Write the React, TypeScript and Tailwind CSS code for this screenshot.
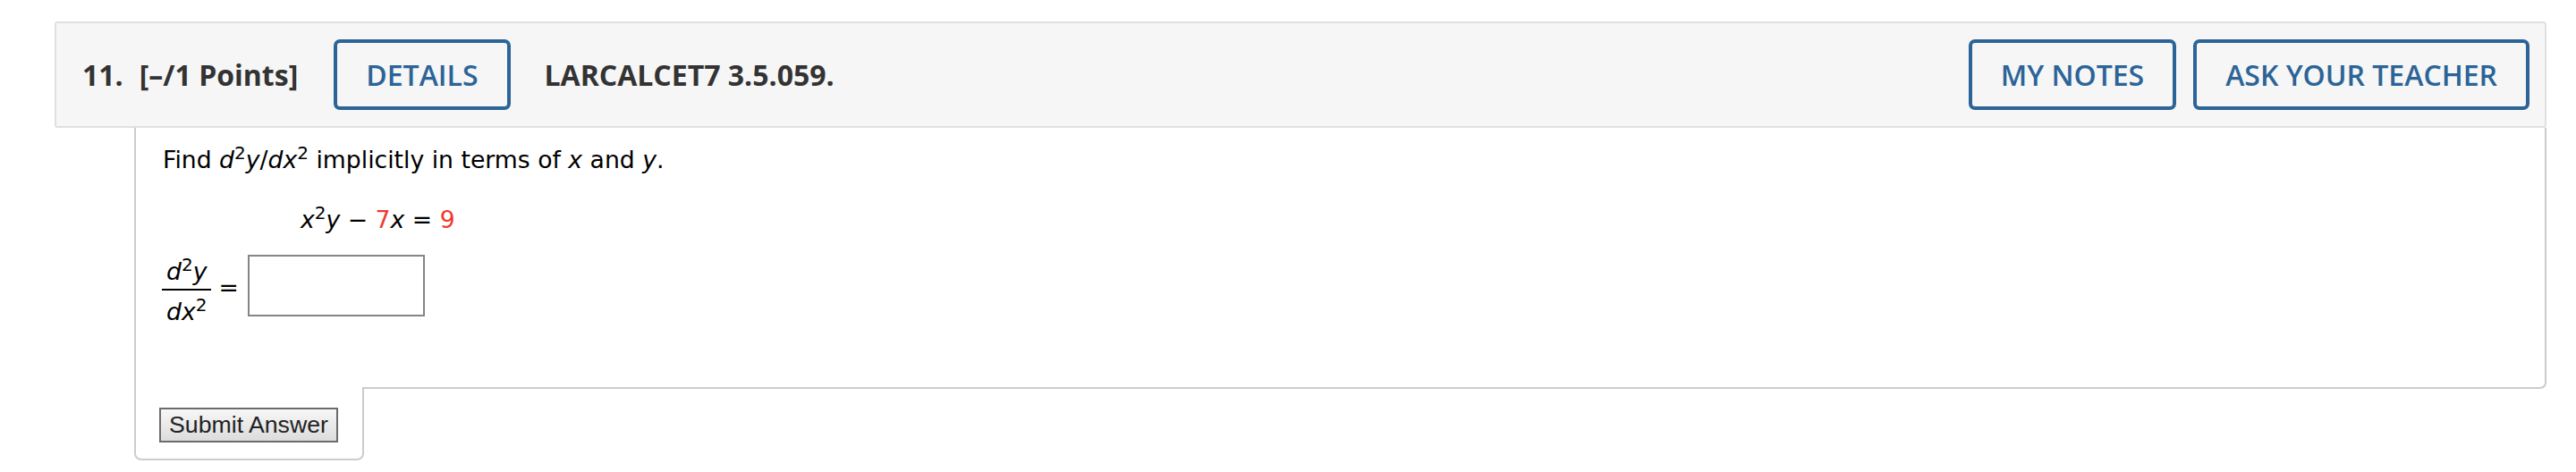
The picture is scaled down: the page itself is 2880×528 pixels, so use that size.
export default function App() {
  const btn =
    "h-[79px] px-[32px] border-[4px] border-[#2c6497] rounded-[7px] text-[#2c6497] text-[32px] font-semibold leading-none flex items-center";

  return (
    <div className="w-[2880px] h-[528px] bg-white pt-[24px] pl-[61px] pr-[33px]">
      {/* Question header */}
      <div
        className="h-[119px] bg-[#f6f6f6] border-[2px] border-[#e0e0e0] rounded-[3px] flex items-center pl-[29px] pr-[17px] text-[#333333]"
        style={{ fontFamily: '"Open Sans", sans-serif' }}
      >
        <span className="text-[32px] font-bold">11.</span>
        <span className="text-[32px] font-bold ml-[18px]">[–/1 Points]</span>
        <button className={`${btn} ml-[40px]`}>DETAILS</button>
        <span className="text-[32px] font-bold ml-[38px]">LARCALCET7 3.5.059.</span>
        <div className="ml-auto flex gap-[19px]">
          <button className={`${btn} px-[31px]`}>MY NOTES</button>
          <button className={`${btn} px-[31px]`}>ASK YOUR TEACHER</button>
        </div>
      </div>

      {/* Question body */}
      <div className="ml-[89px]">
        <div
          className="h-[292px] border-x-[2px] border-b-[2px] border-[#cccccc] rounded-br-[7px] pl-[30px] pt-[18px] text-black text-[26.67px]"
          style={{ fontFamily: '"DejaVu Sans", Verdana, sans-serif' }}
        >
          <p className="leading-[36px]">
            Find <i>d</i>
            <sup>2</sup>
            <i>y</i>/<i>dx</i>
            <sup>2</sup> implicitly in terms of <i>x</i> and <i>y</i>.
          </p>
          <p className="leading-[36px] mt-[31px] pl-[154px]">
            <i>x</i>
            <sup>2</sup>
            <i>y</i> − <span className="text-[#ee3a2c]">7</span>
            <i>x</i> = <span className="text-[#ee3a2c]">9</span>
          </p>
          <div className="flex items-start mt-[21px]">
            <div className="mt-[3px] -ml-[1px] flex flex-col items-stretch">
              <div className="leading-[32px] px-[5px] text-center">
                <i>d</i>
                <sup>2</sup>
                <i>y</i>
              </div>
              <div className="mt-[3px] h-[2px] bg-black" />
              <div className="leading-[32px] mt-[8px] px-[5px] text-center">
                <i>dx</i>
                <sup>2</sup>
              </div>
            </div>
            <span className="leading-[32px] mt-[21px] ml-[8px]">=</span>
            <input
              type="text"
              className="ml-[10px] w-[198px] h-[69px] border-[2px] border-[#858585] bg-white outline-none"
            />
          </div>
        </div>
        <div className="relative -mt-[2px] w-[257px] h-[82px] bg-white border-x-[2px] border-b-[2px] border-[#cccccc] rounded-b-[8px] pl-[26px] pt-[23px]">
          <button
            className="w-[200px] h-[39px] border-[2px] border-[#6b6b6b] bg-gradient-to-b from-[#f7f7f7] to-[#dcdcdc] text-[#222222] text-[26.67px] leading-none"
            style={{ fontFamily: '"Liberation Sans", Arial, sans-serif' }}
          >
            Submit Answer
          </button>
        </div>
      </div>
    </div>
  );
}
